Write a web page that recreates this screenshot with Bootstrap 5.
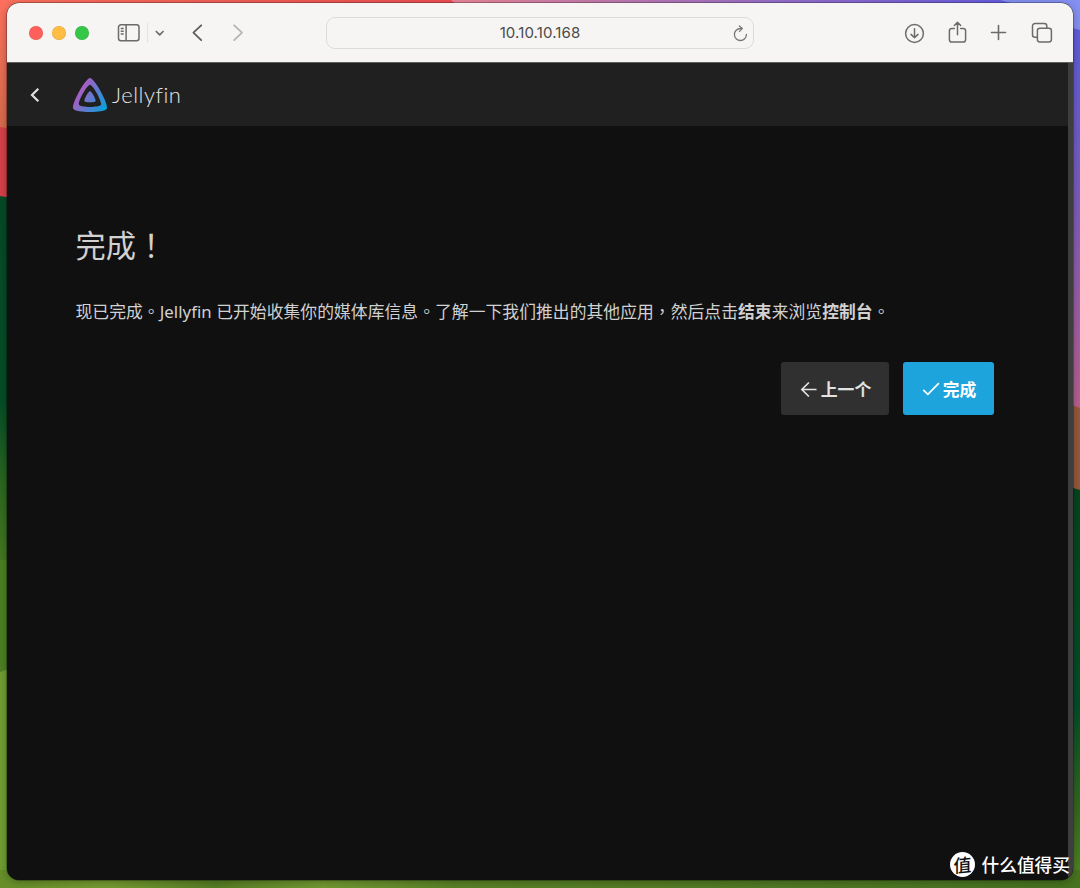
<!DOCTYPE html>
<html lang="zh-CN">
<head>
<meta charset="utf-8">
<meta name="viewport" content="width=device-width, initial-scale=1">
<title>Jellyfin</title>
<link href="https://cdn.jsdelivr.net/npm/bootstrap@5.3.0/dist/css/bootstrap.min.css" rel="stylesheet">
<style>
body{background:#4f7c20;font-family:"Noto Sans","Noto Sans CJK TC",sans-serif;color:#d1d1d1}
svg{display:block;flex:none}
.wallpaper{z-index:0}
.desktop{height:888px;padding:3px 7px 8px}
.browser{z-index:1;border-radius:12px;background:#101010;box-shadow:0 0 0 .5px rgba(0,0,0,.5),0 2px 9px rgba(0,0,0,.3)}
.toolbar{height:60px;padding-top:1px;background:#f6f5f3;color:#6c6b69;border-bottom:1px solid #5d625a;display:grid;grid-template-columns:319px 428px 1fr}
.dot{width:14px;height:14px;border-radius:50%;box-shadow:inset 0 0 0 .5px rgba(0,0,0,.12)}
.address{height:32px;border:1.5px solid #dcdbd8;border-radius:9px;font:15px/30px Inter,"Liberation Sans",sans-serif;letter-spacing:.12px;color:#4c4b49}
.split{width:1px;height:20px;background:#e3e2e0}
.apphead{height:63px;background:#202020}
.wordmark{font:300 22px/30px Lato,sans-serif;letter-spacing:.5px;font-variant-ligatures:none;color:#e4e4e4}
.track{width:5px;background:#3e3e3e}
.wizard{padding:98px 74px 0 68.5px}
.wizard h1{font-size:30.24px;line-height:44px;font-weight:400;margin:0 0 31px}
.wizard p{font-size:16.8px;line-height:26px;letter-spacing:.05px;margin:0 0 37px;white-space:nowrap}
.wizard .btn{height:53px;border:0;border-radius:3px;font-size:16.8px;font-weight:600;line-height:24px;padding:2px 0 0;gap:2px;color:#e2e2e2}
.wizard .btn-prev{width:108px;background:#303030}
.wizard .btn-done{width:91px;background:#1da4dc;color:#fff}
.watermark{z-index:2;right:10px;bottom:11px;color:#fff;font:500 17.7px/26px "Noto Sans CJK SC",sans-serif}
.seal{width:25px;height:25px;border-radius:50%;background:#fff;color:#111;font-size:18px;line-height:24px;font-weight:500}
.seal span{display:block;transform:skewY(-5deg)}
</style>
</head>
<body>
<div class="desktop position-relative overflow-hidden">
<svg class="wallpaper position-absolute top-0 start-0" width="1080" height="888" aria-hidden="true">
  <defs>
    <linearGradient id="red" x2="1" y2="0"><stop stop-color="#fc705d"/><stop offset="1" stop-color="#ed4f53"/></linearGradient>
    <linearGradient id="top" x2="1" y2="0"><stop stop-color="#eb8799"/><stop offset=".25" stop-color="#c37bb0"/><stop offset=".52" stop-color="#976fcb"/><stop offset="1" stop-color="#5958e6"/></linearGradient>
    <linearGradient id="left" x2="0" y2="1"><stop stop-color="#fc705d"/><stop offset="1" stop-color="#d56a4c"/></linearGradient>
    <linearGradient id="right" x2="0" y2="1"><stop stop-color="#5a5ce0"/><stop offset=".45" stop-color="#795cbd"/><stop offset="1" stop-color="#b85f8f"/></linearGradient>
    <linearGradient id="leaf" x2="0" y2="1"><stop stop-color="#064a27"/><stop offset=".56" stop-color="#064d26"/><stop offset=".78" stop-color="#2c6720"/><stop offset="1" stop-color="#477820"/></linearGradient>
    <linearGradient id="leafR" x2="0" y2="1"><stop stop-color="#05441f"/><stop offset=".55" stop-color="#034d27"/><stop offset=".8" stop-color="#33681e"/><stop offset="1" stop-color="#508a23"/></linearGradient>
    <linearGradient id="base" x2="1" y2="0"><stop stop-color="#668f29"/><stop offset=".1" stop-color="#769d31"/><stop offset=".2" stop-color="#567e24"/><stop offset=".3" stop-color="#739b31"/><stop offset=".42" stop-color="#5a8327"/><stop offset="1" stop-color="#477320"/></linearGradient>
  </defs>
  <path fill="url(#red)" d="M0 0h460v10H0z"/>
  <path fill="url(#top)" d="M451 0h629v10H463z"/>
  <path fill="url(#left)" d="M0 3h12v130H0z"/>
  <path fill="#d54049" d="M0 127l12 2v72H0z"/>
  <path fill="url(#leaf)" d="M0 196l12 2v370H0z"/>
  <path fill="#4d7f23" d="M0 560h12v120H0z"/>
  <path fill="#709d31" d="M0 672l12-4v220H0z"/>
  <path fill="url(#right)" d="M1066 10h14v400h-14z"/>
  <path fill="#8490f2" d="M1000 0h80v30l-20-5-8-15-38-6z"/>
  <path fill="#96583b" d="M1066 403l14 5v85h-14z"/>
  <path fill="url(#leafR)" d="M1066 486l14 4v398h-14z"/>
  <path fill="url(#base)" d="M0 870h1080v18H0z"/>
</svg>

<main class="browser position-relative h-100 overflow-hidden d-flex flex-column">
  <header class="toolbar align-items-center">
    <div class="d-flex align-items-center">
      <div class="d-flex" style="gap:9px;margin-left:22px">
        <span class="dot" style="background:#ff605c"></span><span class="dot" style="background:#ffbd44"></span><span class="dot" style="background:#34c748"></span>
      </div>
      <svg style="margin-left:28px" width="24" height="20" fill="none" stroke="currentColor" stroke-width="1.5"><rect x="1.500" y="1.800" width="20.500" height="16" rx="2.500"/><path d="M9.100 2v16M3.700 5.500h3M3.700 8.200h3M3.700 10.900h3"/></svg>
      <span class="split" style="margin-left:6px"></span>
      <svg style="margin-left:6px" width="12" height="10" fill="none" stroke="currentColor" stroke-width="1.7" stroke-linecap="round" stroke-linejoin="round"><path d="M2.300 3.500l3.400 3.300 3.400-3.300"/></svg>
      <svg style="margin-left:24px" width="14" height="20" fill="none" stroke="#5e5d5b" stroke-width="1.800" stroke-linecap="round" stroke-linejoin="round"><path d="M11.200 2.300L3.400 9.700l7.800 7.400"/></svg>
      <svg style="margin-left:27px" width="14" height="20" fill="none" stroke="#b6b5b3" stroke-width="1.800" stroke-linecap="round" stroke-linejoin="round"><path d="M3.200 2.300L11 9.700l-7.800 7.400"/></svg>
    </div>
    <div class="address position-relative text-center">10.10.10.168
      <svg class="position-absolute" style="right:4px;top:7px" width="17" height="19" fill="none" stroke="#777674" stroke-width="1.300" stroke-linecap="round" stroke-linejoin="round"><path d="M14.400 9.500a6 6 0 1 1-6-6h1.800M7.300.9l3 2.700-2.800 2.800"/></svg>
    </div>
    <div class="d-flex align-items-center justify-content-end" style="padding-right:20px">
      <svg width="21" height="21" fill="none" stroke="currentColor" stroke-width="1.500" stroke-linecap="round" stroke-linejoin="round"><circle cx="10.500" cy="10.500" r="8.900"/><path d="M10.500 5.700v9M7 11.400l3.500 3.400 3.500-3.400"/></svg>
      <svg style="margin-left:23px;margin-top:-2px" width="19" height="24" fill="none" stroke="currentColor" stroke-width="1.500" stroke-linecap="round" stroke-linejoin="round"><path d="M6.300 8.500H3.600a2.200 2.200 0 0 0-2.200 2.200v9.100A2.200 2.200 0 0 0 3.600 22h11.800a2.200 2.200 0 0 0 2.200-2.200v-9.100a2.200 2.200 0 0 0-2.200-2.200h-2.700M9.500 14.700V2.500M6.300 5.500l3.200-3.200 3.200 3.200"/></svg>
      <svg style="margin-left:23px;margin-top:-1px" width="17" height="17" fill="none" stroke="currentColor" stroke-width="1.600" stroke-linecap="round"><path d="M1.500 8.500h14M8.500 1.500v14"/></svg>
      <svg style="margin-left:24px" width="22" height="22" fill="none" stroke="currentColor" stroke-width="1.500"><path d="M6.500 15.200H4a2.500 2.500 0 0 1-2.500-2.500V4A2.500 2.500 0 0 1 4 1.500h9.300A2.500 2.500 0 0 1 15.800 4v2.200"/><rect x="6.400" y="6.200" width="14" height="13.800" rx="2.400"/></svg>
    </div>
  </header>

  <div class="d-flex flex-grow-1">
    <div class="flex-grow-1">
      <nav class="apphead d-flex align-items-center">
        <svg style="margin-left:21px" width="13" height="16" fill="none" stroke="#e0e0e0" stroke-width="2.200"><path d="M10.300 1.700L4 8l6.300 6.300"/></svg>
        <svg style="margin-left:32px" width="34" height="34" viewBox="56 56 400 400">
          <defs><linearGradient id="jelly" gradientUnits="userSpaceOnUse" x1="126" y1="219" x2="458" y2="411"><stop stop-color="#aa5cc3"/><stop offset="1" stop-color="#00a4dc"/></linearGradient></defs>
          <path fill="url(#jelly)" d="M190.600 329c8.600 17.400 122.400 17.200 130.900 0S273.600 209.300 256 209.300s-74.100 102.500-65.400 119.700z"/>
          <path fill="url(#jelly)" fill-rule="evenodd" d="M58.700 417c26 52.200 368.900 51.600 394.600 0S308.900 56.100 256 56.100 32.800 364.900 58.700 417zm68-45.200c-17-34.200 94.700-236.500 129.300-236.500s146.100 202.400 129.300 236.500-241.500 34.200-258.600 0z"/>
        </svg>
        <span class="wordmark" style="margin-left:5px">Jellyfin</span>
      </nav>
      <section class="wizard" lang="zh-TW">
        <h1>完成！</h1>
        <p>现已完成。Jellyfin 已开始收集你的媒体库信息。了解一下我们推出的其他应用，然后点击<b>结束</b>来浏览<b>控制台</b>。</p>
        <div class="d-flex justify-content-end" style="gap:14px">
          <button type="button" class="btn btn-prev d-flex align-items-center justify-content-center"><svg width="20" height="20" fill="none" stroke="currentColor" stroke-width="1.700"><path d="M17.500 9.500H3.200M9.900 2.500l-7 7 7 7"/></svg>上一个</button>
          <button type="button" class="btn btn-done d-flex align-items-center justify-content-center"><svg width="20" height="20" fill="none" stroke="currentColor" stroke-width="1.700"><path d="M2.200 9.800l4.700 4.500L17.900 3.200"/></svg>完成</button>
        </div>
      </section>
    </div>
    <div class="track"></div>
  </div>
</main>

<div class="watermark position-absolute d-flex align-items-center" style="gap:7px"><span class="seal text-center"><span>值</span></span>什么值得买</div>
</div>
<script src="https://cdn.jsdelivr.net/npm/bootstrap@5.3.0/dist/js/bootstrap.bundle.min.js"></script>
</body>
</html>
